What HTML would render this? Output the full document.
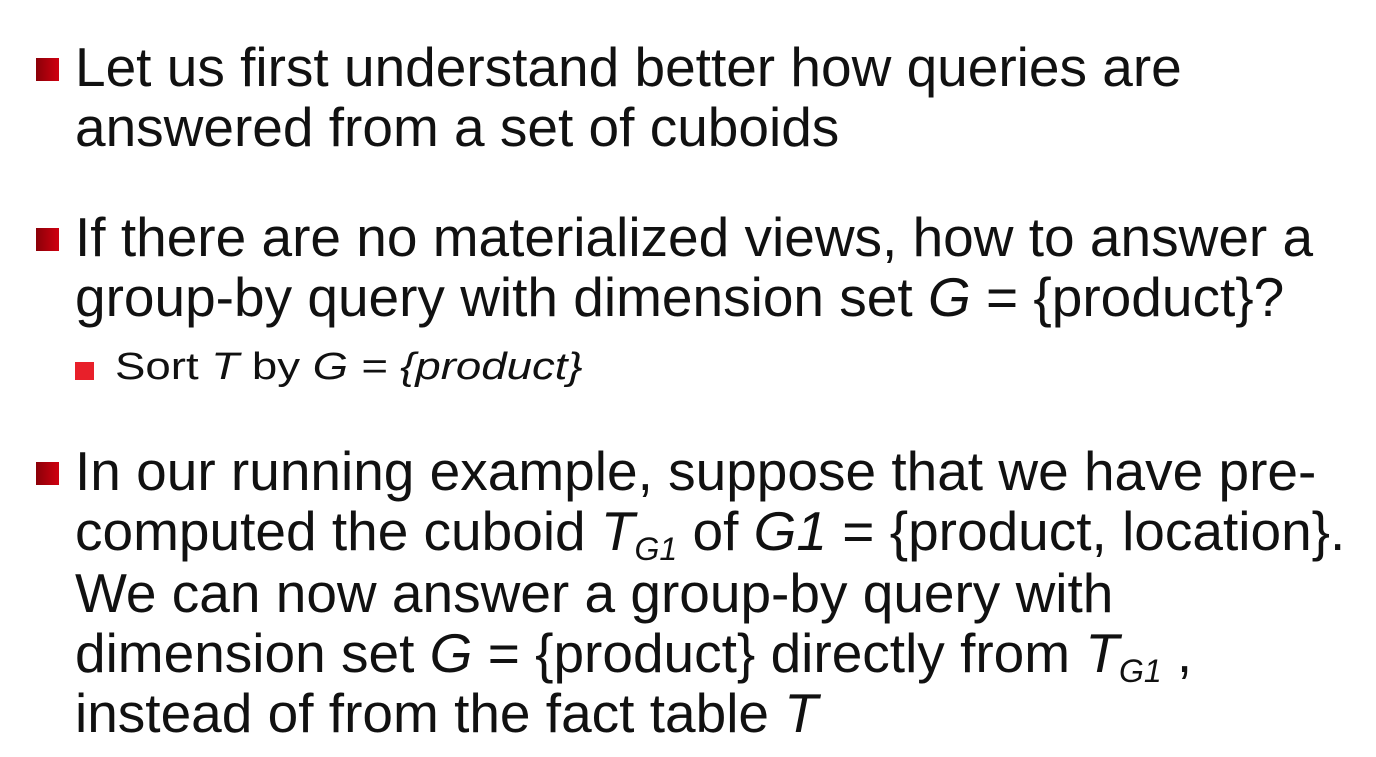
<!DOCTYPE html>
<html><head><meta charset="utf-8"><style>
body{margin:0;width:1376px;height:757px;background:#fff;overflow:hidden;position:relative;font-family:"Liberation Sans",Arial,sans-serif;color:#111}
.l{position:absolute;left:75px;font-size:55px;line-height:60px;white-space:nowrap}
.b{position:absolute;left:36px;width:23px;height:23px;background:linear-gradient(90deg,#8a0008,#d00010)}
.s{position:absolute;left:75px;width:19px;height:18px;background:#e8202a}
.sub{position:absolute;left:115px;font-size:38px;line-height:40px;white-space:nowrap;transform:scaleX(1.2);transform-origin:0 0}
sub{font-size:32px;vertical-align:-10px;line-height:0}
</style></head><body>
<div class="b" style="top:58px"></div>
<div class="l" style="top:37px">Let us first understand better how queries are</div>
<div class="l" style="top:97px">answered from a set of cuboids</div>
<div class="b" style="top:228px"></div>
<div class="l" style="top:207px">If there are no materialized views, how to answer a</div>
<div class="l" style="top:267px">group-by query with dimension set <i>G</i> = {product}?</div>
<div class="s" style="top:362px"></div>
<div class="sub" style="top:347px">Sort <i>T</i> by <i>G = {product}</i></div>
<div class="b" style="top:462px"></div>
<div class="l" style="top:441px">In our running example, suppose that we have pre-</div>
<div class="l" style="top:501px">computed the cuboid <i>T<sub>G1</sub></i> of <i>G1</i> = {product, location}.</div>
<div class="l" style="top:563px">We can now answer a group-by query with</div>
<div class="l" style="top:623px">dimension set <i>G</i> = {product} directly from <i>T<sub>G1</sub></i> ,</div>
<div class="l" style="top:683px">instead of from the fact table <i>T</i></div>
</body></html>
